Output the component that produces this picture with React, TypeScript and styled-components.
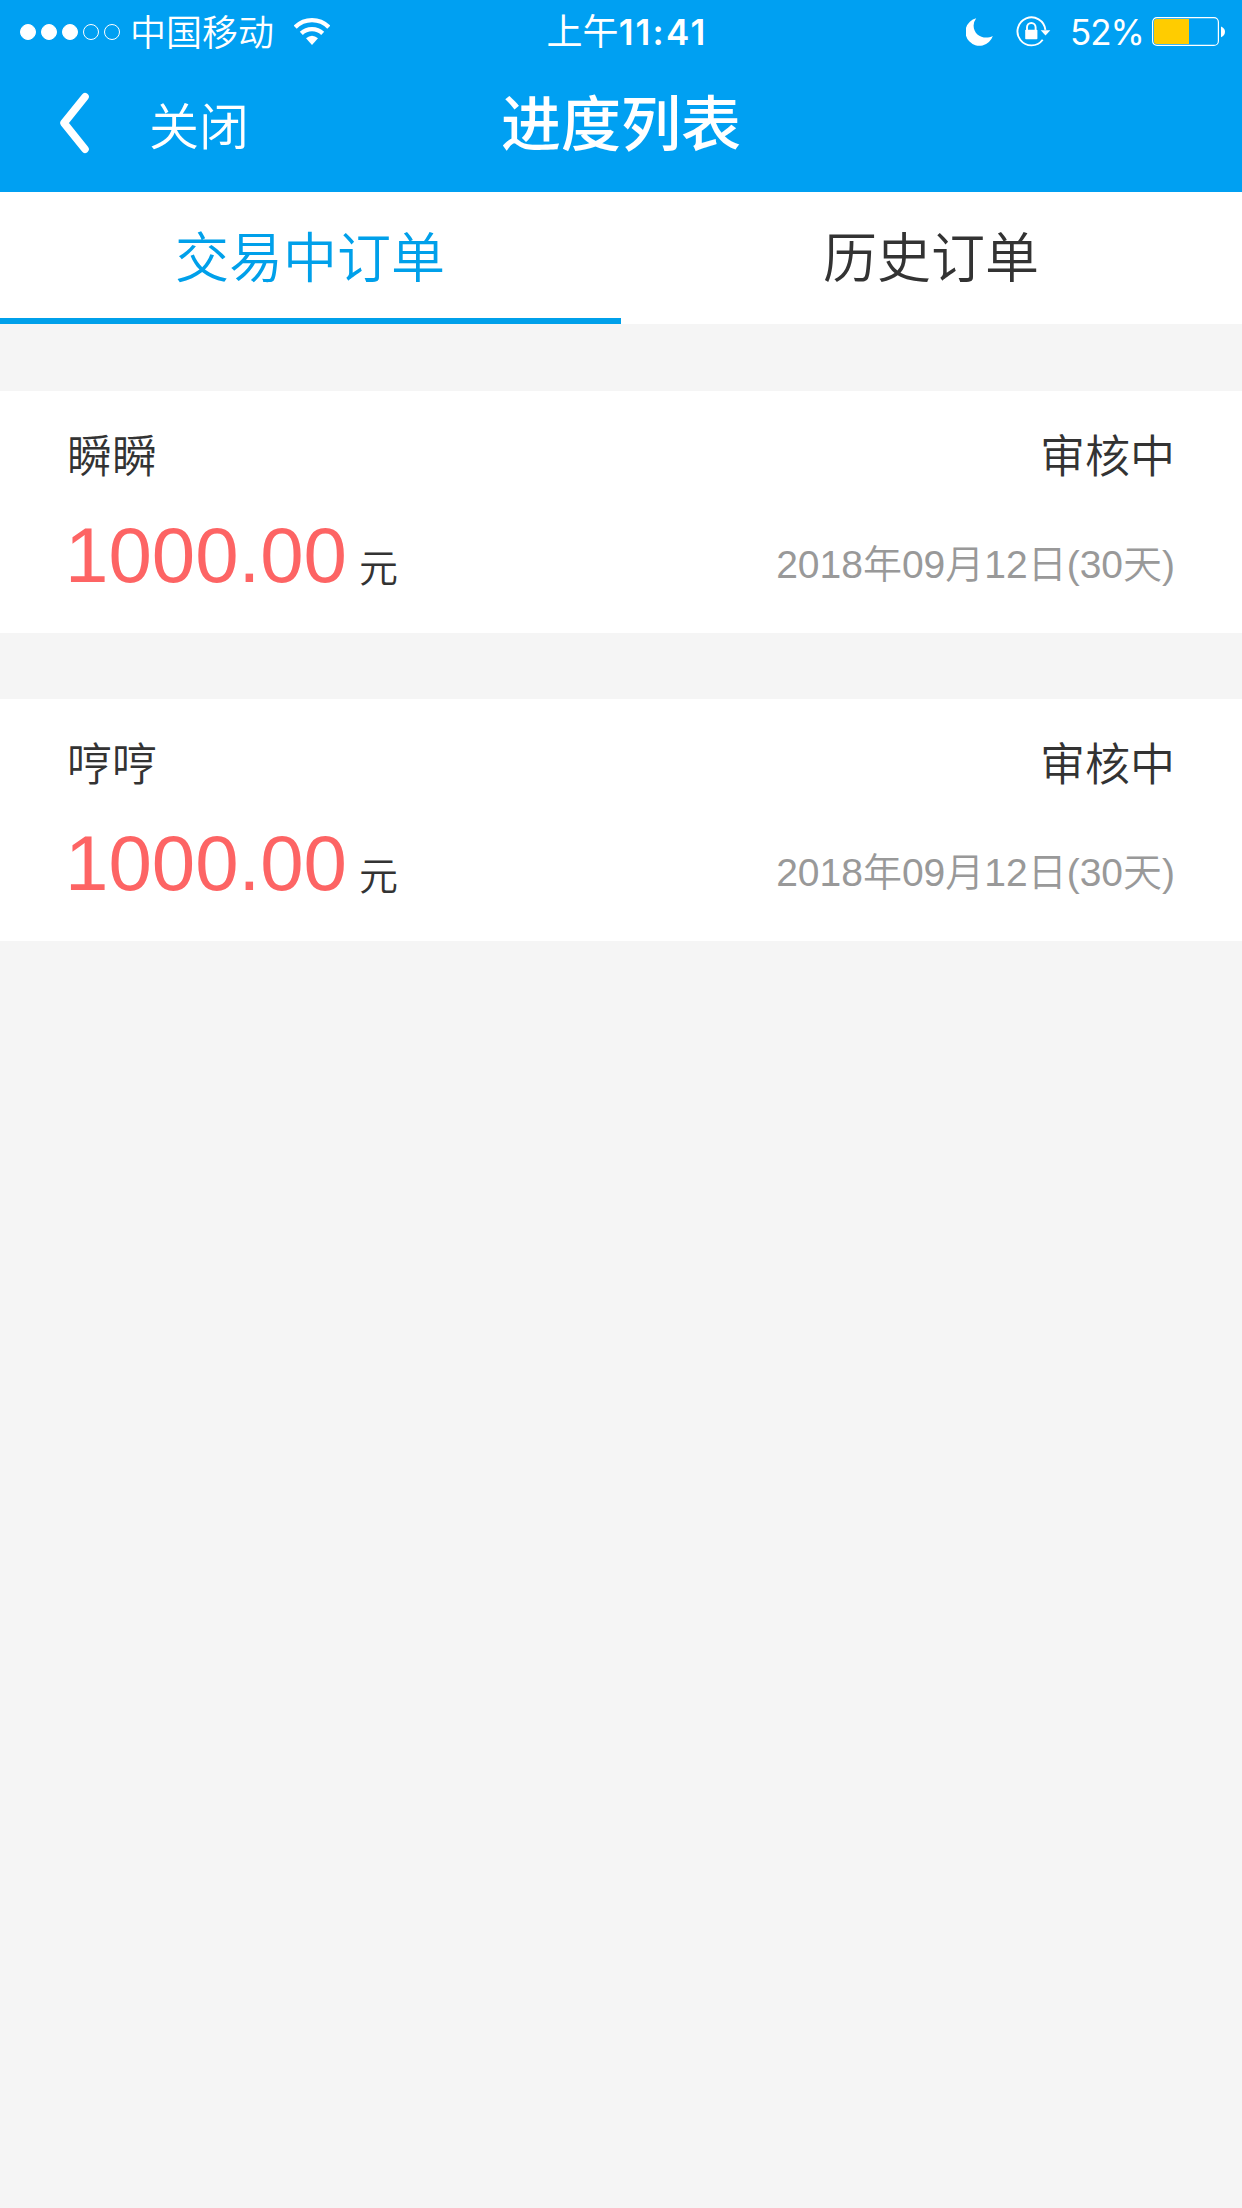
import React from "react";
import styled, { createGlobalStyle } from "styled-components";

const GlobalStyle = createGlobalStyle`
  html, body { margin: 0; background: #f5f5f5; }
  * { box-sizing: border-box; }
`;

const Screen = styled.div`
  width: 1242px;
  min-height: 2208px;
  background: #f5f5f5;
  color: #333;
  font-family: "Liberation Sans", "Noto Sans CJK SC", sans-serif;
`;

const Header = styled.header`
  height: 192px;
  background: #00a0f2;
  color: #fff;
`;

const StatusBar = styled.div`
  height: 60px;
  display: grid;
  grid-template-columns: 1fr auto 1fr;
  align-items: center;
  padding: 0 17px 0 20px;
  font: 400 36px/60px Inter, "Noto Sans CJK SC", sans-serif;
`;

const StatusGroup = styled.div<{ $end?: boolean }>`
  display: flex;
  align-items: center;
  justify-content: ${(p) => (p.$end ? "flex-end" : "flex-start")};
  svg { display: block; flex: none; }
`;

const Signal = styled.div`
  display: flex;
  gap: 5px;
`;

const Dot = styled.i<{ $on: boolean }>`
  width: 16px;
  height: 16px;
  border-radius: 50%;
  border: 1px solid #fff;
  background: ${(p) => (p.$on ? "#fff" : "transparent")};
`;

const Carrier = styled.span`
  margin: 0 20px 3px 10px;
  height: 60px;
  font-family: "Noto Sans CJK SC DemiLight", "Noto Sans CJK SC", sans-serif;
  font-weight: 350;
`;

const Clock = styled.time`
  height: 60px;
  padding: 0 0 0 9px;
  white-space: nowrap;
`;

const ClockDigits = styled.span`
  font-size: 35px;
  font-weight: 600;
  letter-spacing: 2.2px;
`;

const StatusIcons = styled.div`
  display: flex;
  align-items: center;
  gap: 23px;
`;

const Percent = styled.span`
  height: 60px;
  margin: 0 8px 0 19px;
  font-size: 35px;
  letter-spacing: -1px;
`;

const NavBar = styled.div`
  height: 132px;
  display: grid;
  grid-template-columns: 1fr auto 1fr;
`;

const NavLeft = styled.div`
  display: flex;
  padding-left: 54px;
`;

const BackIcon = styled.svg`
  display: block;
  margin-top: 30px;
`;

const Close = styled.span`
  margin-left: 55px;
  font-size: 50px;
  font-weight: 350;
  line-height: 136px;
`;

const Title = styled.h1`
  margin: 0;
  font-size: 60px;
  font-weight: 500;
  line-height: 132px;
`;

const Tabs = styled.nav`
  display: grid;
  grid-template-columns: 1fr 1fr;
  height: 132px;
  background: #fff;
`;

const Tab = styled.a<{ $active?: boolean }>`
  height: 132px;
  padding-right: 1px;
  border-bottom: 6px solid ${(p) => (p.$active ? "#00a0ea" : "transparent")};
  color: ${(p) => (p.$active ? "#00a0ea" : "#333")};
  font-size: 54px;
  font-weight: 350;
  line-height: 135px;
  text-align: center;
`;

const List = styled.main`
  display: flex;
  flex-direction: column;
  gap: 66px;
  padding-top: 67px;
`;

const Card = styled.article`
  height: 242px;
  padding: 34px 67px 0 67px;
  background: #fff;
`;

const Row = styled.div<{ $height: number }>`
  display: flex;
  justify-content: space-between;
  height: ${(p) => p.$height}px;
  line-height: ${(p) => p.$height}px;
  font-size: 45px;
  font-weight: 350;
`;

const Amount = styled.span`
  margin-left: -2px;
  color: #fd6464;
  font-size: 78px;
`;

const Unit = styled.span`
  margin-left: 12px;
  font-size: 39px;
`;

const DateText = styled.span`
  padding-top: 10px;
  color: #999;
  font-size: 39px;
`;

const WifiIcon = () => (
  <svg width="36" height="27" viewBox="0 0 36 27" fill="none" stroke="#fff" strokeWidth="4.3">
    <path d="M1.2 9.2C10.5 -.2 25.5 -.2 34.8 9.2" />
    <path d="M7.3 15.4C13.2 9.6 22.8 9.6 28.7 15.4" />
    <path d="M12 20.3Q18 15.2 24 20.3L18 27Z" fill="#fff" stroke="none" />
  </svg>
);

const MoonIcon = () => (
  <svg width="27" height="28" viewBox="0 0 27 28" fill="#fff">
    <path d="M10.2.2A14 14 0 1 0 26.8 18C18 22.5 7.5 17 7.6 7.5Q7.8 3.4 10.2.2Z" />
  </svg>
);

const LockIcon = () => (
  <svg width="35" height="31" viewBox="0 0 35 31" fill="none" stroke="#fff">
    <path d="M29.4 13.8A14 14 0 1 0 26.7 23.8" strokeWidth="1.9" />
    <path d="M24.7 14.2H34.3L29.5 19.4Z" fill="#fff" stroke="none" />
    <rect x="9.2" y="13.8" width="12.2" height="9.5" rx=".8" fill="#fff" stroke="none" />
    <path d="M11 14.5V11.3a4.3 4.3 0 0 1 8.6 0v3.2" strokeWidth="1.9" />
  </svg>
);

const BatteryIcon = () => (
  <svg width="73" height="29" viewBox="0 0 73 29" fill="none">
    <rect x=".6" y=".6" width="65.8" height="27.8" rx="4.5" stroke="#fff" strokeWidth="1.2" />
    <path d="M4.5 2H37V27H4.5A2.5 2.5 0 0 1 2 24.5V4.5A2.5 2.5 0 0 1 4.5 2Z" fill="#fc0" />
    <path d="M69 9.5Q73 11.2 73 14.8T69 20.2Z" fill="#fff" />
  </svg>
);

const orders = [
  { name: "瞬瞬", status: "审核中", amount: "1000.00", date: "2018年09月12日(30天)" },
  { name: "哼哼", status: "审核中", amount: "1000.00", date: "2018年09月12日(30天)" },
];

export default function App() {
  return (
    <Screen>
      <GlobalStyle />
      <Header>
        <StatusBar>
          <StatusGroup>
            <Signal>
              {[true, true, true, false, false].map((on, i) => (
                <Dot key={i} $on={on} />
              ))}
            </Signal>
            <Carrier>中国移动</Carrier>
            <WifiIcon />
          </StatusGroup>
          <Clock>
            上午<ClockDigits>11:41</ClockDigits>
          </Clock>
          <StatusGroup $end>
            <StatusIcons>
              <MoonIcon />
              <LockIcon />
            </StatusIcons>
            <Percent>52%</Percent>
            <BatteryIcon />
          </StatusGroup>
        </StatusBar>
        <NavBar>
          <NavLeft>
            <BackIcon width="40" height="66" viewBox="0 0 40 66" fill="none" stroke="#fff" strokeWidth="7.6" strokeLinecap="round" strokeLinejoin="round">
              <path d="M31 6.8L10 33L31 59.2" />
            </BackIcon>
            <Close>关闭</Close>
          </NavLeft>
          <Title>进度列表</Title>
          <span />
        </NavBar>
      </Header>
      <Tabs>
        <Tab $active>交易中订单</Tab>
        <Tab>历史订单</Tab>
      </Tabs>
      <List>
        {orders.map((o) => (
          <Card key={o.name}>
            <Row $height={66}>
              <span>{o.name}</span>
              <span>{o.status}</span>
            </Row>
            <Row $height={128}>
              <span>
                <Amount>{o.amount}</Amount>
                <Unit>元</Unit>
              </span>
              <DateText>{o.date}</DateText>
            </Row>
          </Card>
        ))}
      </List>
    </Screen>
  );
}
